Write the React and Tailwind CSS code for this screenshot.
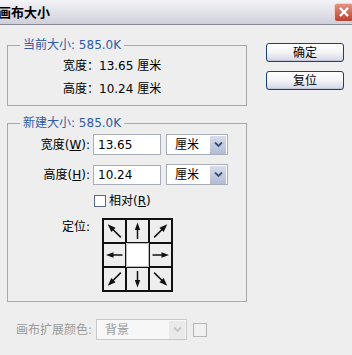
import React from "react";

const ARROWS = [-45, 0, 45, -90, null, 90, -135, 180, 135];

const Arrow = ({ angle }) => {
  const diag = angle % 90 !== 0;
  return (
    <svg width="21" height="22" viewBox="0 0 21 22">
      <g transform={`rotate(${angle} 10.5 11)`}>
        <line x1="10.5" y1={diag ? 20 : 19} x2="10.5" y2="6" stroke="#111" strokeWidth="1.5" />
        <polygon points={diag ? "10.5,1.5 7.5,9.5 13.5,9.5" : "10.5,2.5 7.8,10 13.2,10"} fill="#111" />
      </g>
    </svg>
  );
};

const Select = ({ value, disabled, w }) => (
  <div
    className={`flex items-center h-[21px] border ${w} ${
      disabled ? "border-[#c9c9c9] bg-[#f7f7f7] text-[#9a9a9a]" : "border-[#a7aeb8] bg-white text-black"
    }`}
  >
    <span className="flex-1 pl-[8px] pt-[1px] leading-none">{value}</span>
    <span
      className={`flex items-center justify-center w-[16px] h-[18px] mr-[1px] ${
        disabled ? "bg-[#eaeaea]" : "bg-gradient-to-b from-[#d6dcec] to-[#b3bcd3]"
      }`}
    >
      <svg width="9" height="7" viewBox="0 0 9 7">
        <polyline
          points="1,1.5 4.5,5 8,1.5"
          fill="none"
          stroke={disabled ? "#c4c4c4" : "#3d4f78"}
          strokeWidth="1.8"
        />
      </svg>
    </span>
  </div>
);

const Button = ({ children }) => (
  <button className="w-[78px] h-[19px] rounded-[3px] border border-[#1f3f7a] bg-gradient-to-b from-white via-[#f4f4f8] to-[#d4d6e6] text-[12px] leading-none text-black shadow-[inset_0_-1px_0_#c1c6dc]">
    {children}
  </button>
);

export default function App() {
  return (
    <div className="w-[352px] h-[355px] overflow-hidden bg-[#eeeeee] text-[12px] text-black font-['DejaVu_Sans','Noto_Sans_CJK_SC',sans-serif]">
      {/* 타이틀바 */}
      <div className="flex items-center justify-between h-[25px] border-b border-[#8a8a94] bg-gradient-to-b from-[#f4f4f8] via-[#e2e2ea] to-[#cfcfda]">
        <span className="ml-[-2px] text-[13px] font-bold leading-none">画布大小</span>
        <div className="flex items-center justify-center w-[20px] h-[19px] mr-[-2px] rounded-[3px] border border-[#f0d0c8] bg-gradient-to-b from-[#e39383] to-[#b9402f]">
          <svg width="12" height="12" viewBox="0 0 12 12">
            <path d="M2 2 L10 10 M10 2 L2 10" stroke="white" strokeWidth="2.4" />
          </svg>
        </div>
      </div>

      <div className="flex pl-[7px]">
        {/* 왼쪽 */}
        <div className="w-[240px]">
          <fieldset className="mt-[12px] h-[69px] border border-[#a8a8a8]">
            <legend className="ml-[12px] px-[3px] leading-[16px] text-[#2e5aa6]">当前大小: 585.0K</legend>
            <div className="pl-[55px] pt-[3px]">
              <div className="h-[20px] flex items-center">宽度：13.65 厘米</div>
              <div className="h-[20px] mt-[3px] flex items-center">高度：10.24 厘米</div>
            </div>
          </fieldset>

          <fieldset className="mt-[9px] h-[187px] border border-[#a8a8a8]">
            <legend className="ml-[12px] px-[3px] leading-[16px] text-[#2e5aa6]">新建大小: 585.0K</legend>
            <div className="pt-[3px]">
              <div className="flex items-center h-[21px]">
                <span className="w-[85px] text-right pr-[3px]">
                  宽度(<u>W</u>):
                </span>
                <div className="w-[68px] h-[21px] border border-[#a7aeb8] bg-white pl-[4px] flex items-center">13.65</div>
                <div className="ml-[5px]">
                  <Select value="厘米" w="w-[62px]" />
                </div>
              </div>
              <div className="flex items-center h-[21px] mt-[9px]">
                <span className="w-[85px] text-right pr-[3px]">
                  高度(<u>H</u>):
                </span>
                <div className="w-[68px] h-[20px] border border-[#a7aeb8] bg-white pl-[4px] flex items-center">10.24</div>
                <div className="ml-[5px]">
                  <Select value="厘米" w="w-[62px]" />
                </div>
              </div>
              <div className="flex items-center h-[14px] mt-[9px] pl-[86px]">
                <span className="w-[12px] h-[12px] border border-[#5a6a84] bg-white" />
                <span className="ml-[3px]">
                  相对(<u>R</u>)
                </span>
              </div>
              <div className="flex mt-[10px]">
                <span className="w-[85px] text-right pr-[3px]">定位:</span>
                <div className="ml-[9px] border border-[#111] grid grid-cols-3">
                  {ARROWS.map((a, i) =>
                    a === null ? (
                      <div key={i} className="w-[23px] h-[24px] bg-white border border-[#b9b9b9] rounded-[2px]" />
                    ) : (
                      <div key={i} className="w-[23px] h-[24px] border border-[#111] flex items-center justify-center">
                        <Arrow angle={a} />
                      </div>
                    )
                  )}
                </div>
              </div>
            </div>
          </fieldset>

          <div className="flex items-center mt-[17px]">
            <span className="ml-[9px] w-[80px] text-[#9a9a9a]">画布扩展颜色:</span>
            <Select value="背景" disabled w="w-[91px]" />
            <span className="ml-[6px] w-[14px] h-[14px] border border-[#b5b5b5] bg-[#f1f1f1]" />
          </div>
        </div>

        {/* 오른쪽 버튼 */}
        <div className="ml-[19px] pt-[18px] flex flex-col gap-[9px]">
          <Button>确定</Button>
          <Button>复位</Button>
        </div>
      </div>
    </div>
  );
}
